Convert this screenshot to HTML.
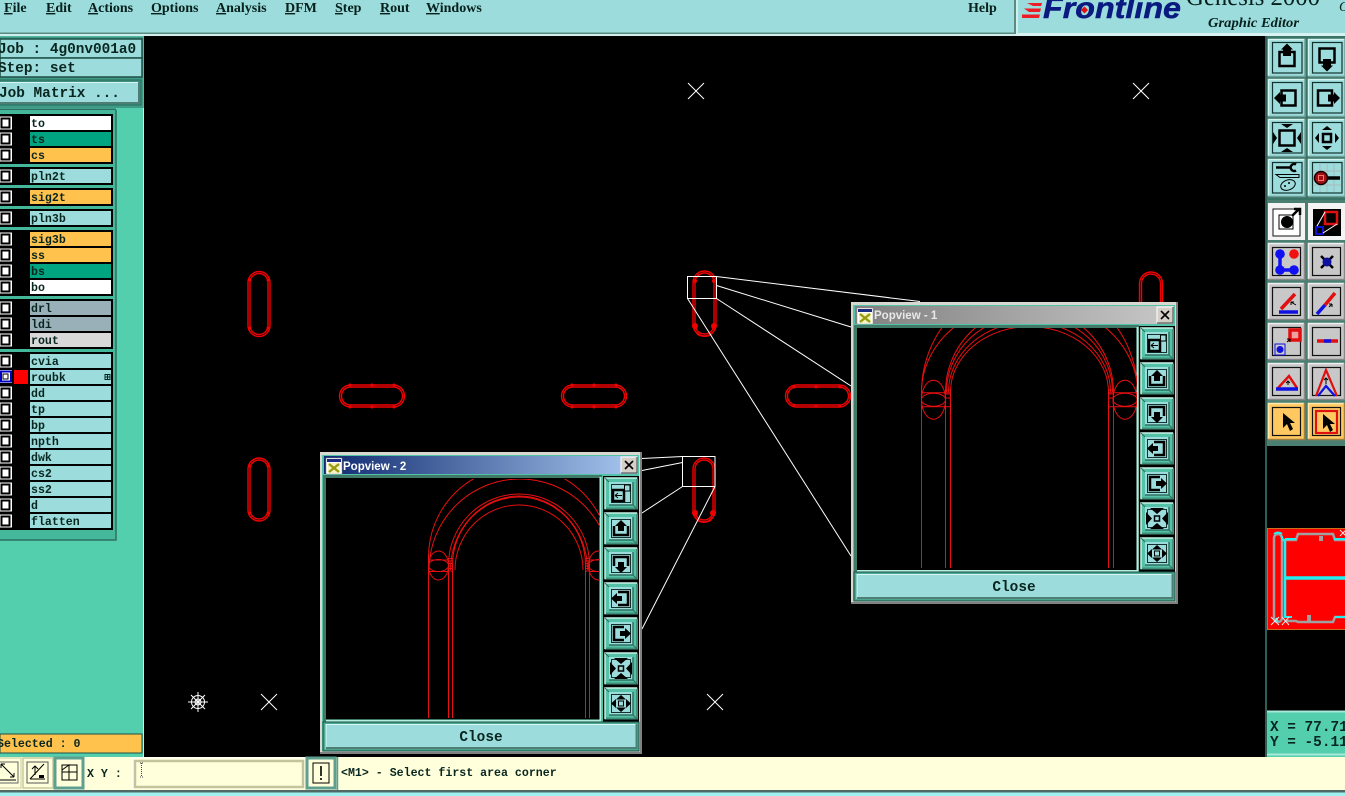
<!DOCTYPE html>
<html><head><meta charset="utf-8"><title>Genesis 2000 Graphic Editor</title>
<style>
html,body{margin:0;padding:0;background:#000;overflow:hidden}
svg{display:block}
.m{font-family:"Liberation Mono",monospace;font-weight:bold;fill:#08261f}
.l{font-size:11.6px}
.b{font-size:14.4px}
.n{font-family:"Liberation Serif",serif;font-weight:bold;font-size:14px;fill:#06201c}
.u{text-decoration:underline}
.w{fill:none;stroke:#fff;stroke-width:1}
.r{fill:none;stroke:#e81010;stroke-width:1}
.s{fill:none;stroke:#f00000;stroke-width:1.4}
</style></head><body>
<svg width="1345" height="796" viewBox="0 0 1345 796" xmlns="http://www.w3.org/2000/svg" xmlns:xlink="http://www.w3.org/1999/xlink">
<defs>
<clipPath id="c1"><rect x="857" y="328" width="280" height="242"/></clipPath>
<clipPath id="c2"><rect x="326" y="479" width="274" height="240"/></clipPath>
<clipPath id="mm"><rect x="1267" y="528" width="78" height="102"/></clipPath>
<!-- teal button base -->
<g id="tb"><rect x="0" y="0" width="37" height="37.500" fill="#9cdcdc"/><path d="M0.500 37V0.500H37" fill="none" stroke="#d4f4f0" stroke-width="1.500"/><path d="M37 0V37.500H0" fill="none" stroke="#6f9f98" stroke-width="1.500"/><rect x="4.500" y="3.500" width="29.500" height="30.500" fill="#9cdcdc" stroke="#12332d" stroke-width="1.200"/></g>
<!-- gray button base -->
<g id="gb"><rect width="37" height="37" fill="#c8c8c8"/><path d="M0.500 36V0.500H36" fill="none" stroke="#f0f0f0" stroke-width="1.500"/><path d="M36.500 0V36.500H0" fill="none" stroke="#888" stroke-width="1.500"/><rect x="4.500" y="4.500" width="28" height="28" fill="#c8c8c8" stroke="#111" stroke-width="1.200"/></g>
<g id="ob"><rect width="37" height="37" fill="#ffc860"/><path d="M0.500 36V0.500H36" fill="none" stroke="#ffe8b0" stroke-width="1.500"/><path d="M36.500 0V36.500H0" fill="none" stroke="#a08040" stroke-width="1.500"/><rect x="4.500" y="4.500" width="28" height="28" fill="#ffc860" stroke="#111" stroke-width="1.200"/></g>
<!-- arrows -->
<g id="up"><rect x="11.500" y="14" width="15" height="14" fill="none" stroke="#000" stroke-width="2.500"/><path d="M19 5.500L25 11.500H23V18H15V11.500H13Z" fill="#000"/></g>
<g id="dn"><rect x="11.500" y="9.500" width="15" height="14" fill="none" stroke="#000" stroke-width="2.500"/><path d="M19 32.500L25 26.500H23V20H15V26.500H13Z" fill="#000"/></g>
<g id="lf"><rect x="13.500" y="11.500" width="14" height="15" fill="none" stroke="#000" stroke-width="2.500"/><path d="M6 19L12 13V15.500H18V22.500H12V25Z" fill="#000"/></g>
<g id="rt"><rect x="10" y="11.500" width="14" height="15" fill="none" stroke="#000" stroke-width="2.500"/><path d="M32 19L26 13V15.500H20V22.500H26V25Z" fill="#000"/></g>
<g id="zi"><rect x="11.500" y="11.500" width="15" height="15" fill="none" stroke="#000" stroke-width="2.500"/><path d="M13 5H25L19 9ZM13 33H25L19 29ZM5 13V25L9 19ZM33 13V25L29 19Z" fill="#000"/></g>
<g id="zo"><rect x="15" y="15" width="8" height="8" fill="none" stroke="#000" stroke-width="2.500"/><path d="M19 7L24 11H14ZM19 31L24 27H14ZM7 19L11 14V24ZM31 19L27 14V24Z" fill="#000"/></g>
<!-- popup button -->
<g id="pb"><rect width="34" height="34" fill="#000"/><rect x="0.500" y="0.500" width="33" height="32" fill="#53c2a6"/><path d="M1 32V1H33" fill="none" stroke="#c8f2e8" stroke-width="1.500"/><path d="M2 31.500H33V2" fill="none" stroke="#3f8f7a" stroke-width="2"/><path d="M1 1L5 5M33 32L29 28" stroke="#2f6f60"/><rect x="5" y="5" width="24" height="23" fill="#9cdcdc"/><path d="M5 28H29V5" fill="none" stroke="#2f6f60" stroke-width="1.500"/></g>
<g id="p0"><rect x="7.500" y="7.500" width="19" height="18" fill="#9cdcdc" stroke="#12332d"/><rect x="9" y="13" width="11" height="11" fill="#9cdcdc" stroke="#000" stroke-width="2.500"/><rect x="20.500" y="8" width="5.500" height="6" fill="#9cdcdc" stroke="#000"/><path d="M11 18.500H18M11 18.500L14 16M11 18.500L14 21" stroke="#000" fill="none"/></g>
<g id="p1"><rect x="7.500" y="7.500" width="19" height="18" fill="#9cdcdc" stroke="#12332d"/><path d="M10 14V23H24V14" fill="none" stroke="#000" stroke-width="2.500"/><path d="M17 8L23 14H20V19H14V14H11Z" fill="#000"/></g>
<g id="p2"><rect x="7.500" y="7.500" width="19" height="18" fill="#9cdcdc" stroke="#12332d"/><path d="M10 19V10H24V19" fill="none" stroke="#000" stroke-width="2.500"/><path d="M17 26L23 20H20V15H14V20H11Z" fill="#000"/></g>
<g id="p3"><rect x="7.500" y="7.500" width="19" height="18" fill="#9cdcdc" stroke="#12332d"/><path d="M14 10H24V23H14" fill="none" stroke="#000" stroke-width="2.500"/><path d="M7 16.500L13 11V14H18V19H13V22Z" fill="#000"/></g>
<g id="p4"><rect x="7.500" y="7.500" width="19" height="18" fill="#9cdcdc" stroke="#12332d"/><path d="M20 10H10V23H20" fill="none" stroke="#000" stroke-width="2.500"/><path d="M27 16.500L21 11V14H16V19H21V22Z" fill="#000"/></g>
<g id="p5"><rect x="7.500" y="7.500" width="19" height="18" fill="#9cdcdc" stroke="#12332d"/><rect x="14.500" y="14" width="5" height="5" fill="none" stroke="#000" stroke-width="1.500"/><path d="M10 6H24L17 12ZM10 27H24L17 21ZM6 10V23L12 16.500ZM28 10V23L22 16.500Z" fill="#000"/></g>
<g id="p6"><rect x="7.500" y="7.500" width="19" height="18" fill="#9cdcdc" stroke="#12332d"/><rect x="14.500" y="14" width="5" height="5" fill="none" stroke="#000"/><path d="M17 8L22 12.500H12ZM17 25L22 20.500H12ZM7 16.500L12 12V21ZM27 16.500L22 12V21Z" fill="#000"/></g>
<g id="ti"><rect width="16" height="16" fill="#fff" stroke="#888" stroke-width=".5"/><rect x="1" y="1" width="14" height="3" fill="#1c2c80"/><rect x="2" y="5" width="12" height="10" fill="#f4f4c0"/><path d="M3 6L13 14M13 6L3 14" stroke="#9a9a10" stroke-width="2.400"/></g>
<g id="cx"><rect width="16" height="16" fill="#d4d0c8"/><path d="M0 16V0H16" fill="none" stroke="#fff"/><path d="M0 16H16V0" fill="none" stroke="#444"/><path d="M4 4L12 12M12 4L4 12" stroke="#000" stroke-width="1.600"/></g>
<g id="ck"><rect x="0" y="-6.500" width="12" height="13" fill="#fff"/><rect x="1.500" y="-4.500" width="8" height="9" fill="none" stroke="#000" stroke-width="2"/></g>
<g id="x8"><path d="M-8 -8L8 8M-8 8L8 -8" stroke="#fff" stroke-width="1"/></g>
<linearGradient id="g2"><stop offset="0" stop-color="#0f2a70"/><stop offset="1" stop-color="#a8c8f0"/></linearGradient>
<linearGradient id="g1"><stop offset="0" stop-color="#808080"/><stop offset="1" stop-color="#c8c8c8"/></linearGradient>
</defs>

<rect width="1345" height="796" fill="#000"/>

<!-- top menu -->
<rect width="1345" height="36" fill="#9cdcdc"/>
<path d="M0 33.500H1015V0" fill="none" stroke="#5a8a80" stroke-width="2"/>
<path d="M1017 36V0" stroke="#e0f6f4" stroke-width="1.500"/>
<rect x="0" y="34" width="1016" height="2" fill="#d0eeee"/>
<rect x="1016" y="33" width="329" height="3" fill="#d8f2f2"/>
<text x="4" y="12" class="n"><tspan class="u">F</tspan>ile</text>
<text x="46" y="12" class="n"><tspan class="u">E</tspan>dit</text>
<text x="88" y="12" class="n"><tspan class="u">A</tspan>ctions</text>
<text x="151" y="12" class="n"><tspan class="u">O</tspan>ptions</text>
<text x="216" y="12" class="n"><tspan class="u">A</tspan>nalysis</text>
<text x="285" y="12" class="n"><tspan class="u">D</tspan>FM</text>
<text x="335" y="12" class="n"><tspan class="u">S</tspan>tep</text>
<text x="380" y="12" class="n"><tspan class="u">R</tspan>out</text>
<text x="426" y="12" class="n"><tspan class="u">W</tspan>indows</text>
<text x="968" y="12" class="n">Help</text>

<!-- logo -->
<path d="M1027 3H1042L1041 6H1033ZM1024 8.500H1041L1040 12H1029ZM1022 14.500H1040L1039 18H1022Z" fill="#ee1c24"/>
<text x="1043" y="18" font-family="Liberation Sans,sans-serif" font-style="italic" font-weight="bold" font-size="30" fill="#0a1a80" stroke="#0a1a80" stroke-width=".5" textLength="138" lengthAdjust="spacingAndGlyphs">Frontline</text>
<path d="M1084.500 6.500L1088 10L1084.500 13.500L1081 10Z" fill="#e01010"/>
<text x="1186" y="5" font-family="Liberation Serif,serif" font-size="25" fill="#06201c" textLength="134" lengthAdjust="spacingAndGlyphs">Genesis 2000</text>
<text x="1208" y="27" font-family="Liberation Serif,serif" font-style="italic" font-weight="bold" font-size="14" fill="#06201c" textLength="91" lengthAdjust="spacingAndGlyphs">Graphic Editor</text>
<text x="1339" y="11" font-family="Liberation Serif,serif" font-style="italic" font-size="14" fill="#06201c">G</text>

<!-- left column -->
<rect x="0" y="36" width="144" height="721" fill="#53b8a0"/>
<rect x="0" y="37" width="143" height="71" fill="#3f9a86"/>
<rect x="0" y="39" width="142" height="19" fill="#9cdcdc" stroke="#1f5046" stroke-width="1.500"/>
<rect x="0" y="58" width="142" height="19" fill="#9cdcdc" stroke="#1f5046" stroke-width="1.500"/>
<rect x="-1" y="80" width="142" height="25" fill="#3f8f7e" stroke="#2a6a5a"/>
<rect x="0" y="82" width="139" height="21" fill="#9cdcdc"/>
<path d="M0 82.500H139" stroke="#d8f6f4"/><path d="M0 103H139V82" fill="none" stroke="#4f7f74" stroke-width="2"/>
<text x="-2" y="53" class="m b">Job : 4g0nv001a0</text>
<text x="-2" y="72" class="m b">Step: set</text>
<text x="-1" y="97" class="m b">Job Matrix ...</text>

<rect x="0" y="108" width="143" height="622" fill="#53cfae"/>
<path d="M0 109.500H116" stroke="#2f6f60" stroke-width="2"/>
<path d="M143.500 108V757" stroke="#c4f2e4"/>
<rect x="0" y="110" width="116" height="430" fill="#45b89c"/>
<path d="M116 110V540H0" fill="none" stroke="#2f6f60" stroke-width="1.500"/>
<rect x="0" y="114" width="113" height="50" fill="#000"/>
<rect x="0" y="167" width="113" height="18" fill="#000"/>
<rect x="0" y="188" width="113" height="18" fill="#000"/>
<rect x="0" y="209" width="113" height="18" fill="#000"/>
<rect x="0" y="230" width="113" height="66" fill="#000"/>
<rect x="0" y="299" width="113" height="50" fill="#000"/>
<rect x="0" y="352" width="113" height="178" fill="#000"/>

<!-- layer labels -->
<rect x="30" y="116" width="81" height="14" fill="#fff"/>
<rect x="30" y="132" width="81" height="14" fill="#00a480"/>
<rect x="30" y="148" width="81" height="14" fill="#ffc24d"/>
<rect x="30" y="169" width="81" height="14" fill="#9cdcdc"/>
<rect x="30" y="190" width="81" height="14" fill="#ffc24d"/>
<rect x="30" y="211" width="81" height="14" fill="#9cdcdc"/>
<rect x="30" y="232" width="81" height="14" fill="#ffc24d"/>
<rect x="30" y="248" width="81" height="14" fill="#ffc24d"/>
<rect x="30" y="264" width="81" height="14" fill="#00a480"/>
<rect x="30" y="280" width="81" height="14" fill="#fff"/>
<rect x="30" y="301" width="81" height="14" fill="#9ab0b8"/>
<rect x="30" y="317" width="81" height="14" fill="#9ab0b8"/>
<rect x="30" y="333" width="81" height="14" fill="#d8d8d8"/>
<rect x="30" y="354" width="81" height="14" fill="#9cdcdc"/>
<rect x="30" y="370" width="81" height="14" fill="#9cdcdc"/>
<rect x="30" y="386" width="81" height="14" fill="#9cdcdc"/>
<rect x="30" y="402" width="81" height="14" fill="#9cdcdc"/>
<rect x="30" y="418" width="81" height="14" fill="#9cdcdc"/>
<rect x="30" y="434" width="81" height="14" fill="#9cdcdc"/>
<rect x="30" y="450" width="81" height="14" fill="#9cdcdc"/>
<rect x="30" y="466" width="81" height="14" fill="#9cdcdc"/>
<rect x="30" y="482" width="81" height="14" fill="#9cdcdc"/>
<rect x="30" y="498" width="81" height="14" fill="#9cdcdc"/>
<rect x="30" y="514" width="81" height="14" fill="#9cdcdc"/>
<rect x="14" y="370" width="14" height="14" fill="#ff0000"/>
<rect x="105" y="374.500" width="5" height="5" fill="none" stroke="#08261f"/>
<path d="M107.500 375V379M105.500 377H109.500" stroke="#08261f"/>
<g class="m l">
<text x="31" y="127">to</text><text x="31" y="143">ts</text><text x="31" y="159">cs</text>
<text x="31" y="180">pln2t</text><text x="31" y="201">sig2t</text><text x="31" y="222">pln3b</text>
<text x="31" y="243">sig3b</text><text x="31" y="259">ss</text><text x="31" y="275">bs</text><text x="31" y="291">bo</text>
<text x="31" y="312">drl</text><text x="31" y="328">ldi</text><text x="31" y="344">rout</text>
<text x="31" y="365">cvia</text><text x="31" y="381">roubk</text><text x="31" y="397">dd</text>
<text x="31" y="413">tp</text><text x="31" y="429">bp</text><text x="31" y="445">npth</text>
<text x="31" y="461">dwk</text><text x="31" y="477">cs2</text><text x="31" y="493">ss2</text>
<text x="31" y="509">d</text><text x="31" y="525">flatten</text>
</g>
<use xlink:href="#ck" x="0" y="123"/><use xlink:href="#ck" x="0" y="139"/><use xlink:href="#ck" x="0" y="155"/>
<use xlink:href="#ck" x="0" y="176"/><use xlink:href="#ck" x="0" y="197"/><use xlink:href="#ck" x="0" y="218"/>
<use xlink:href="#ck" x="0" y="239"/><use xlink:href="#ck" x="0" y="255"/><use xlink:href="#ck" x="0" y="271"/><use xlink:href="#ck" x="0" y="287"/>
<use xlink:href="#ck" x="0" y="308"/><use xlink:href="#ck" x="0" y="324"/><use xlink:href="#ck" x="0" y="340"/>
<use xlink:href="#ck" x="0" y="361"/>
<rect x="0" y="370" width="12" height="13" fill="#fff"/><rect x="1" y="371.500" width="10" height="10" fill="none" stroke="#0000c0" stroke-width="2"/><rect x="3" y="374" width="5" height="5" fill="#fff" stroke="#000" stroke-width="1"/>
<use xlink:href="#ck" x="0" y="393"/><use xlink:href="#ck" x="0" y="409"/><use xlink:href="#ck" x="0" y="425"/><use xlink:href="#ck" x="0" y="441"/>
<use xlink:href="#ck" x="0" y="457"/><use xlink:href="#ck" x="0" y="473"/><use xlink:href="#ck" x="0" y="489"/><use xlink:href="#ck" x="0" y="505"/><use xlink:href="#ck" x="0" y="521"/>

<rect x="0" y="730" width="143" height="27" fill="#53cfae"/>
<rect x="0" y="734" width="142" height="19" fill="#ffc24d" stroke="#1f5046"/>
<text x="-3" y="747" class="m" font-size="11.600">Selected : 0</text>

<!-- main canvas features -->
<use xlink:href="#x8" x="696" y="91"/><use xlink:href="#x8" x="1141" y="91"/>
<use xlink:href="#x8" x="269" y="702"/><use xlink:href="#x8" x="715" y="702"/>
<g stroke="#fff" fill="none"><circle cx="198" cy="702" r="6.500"/><circle cx="198" cy="702" r="3"/><path d="M188 702H208M198 692V712M191 695L205 709M205 695L191 709"/></g>

<g class="s">
<rect x="248" y="271.500" width="22" height="65" rx="11"/><rect x="250" y="273.500" width="18" height="61" rx="9"/>
<rect x="693" y="271" width="23" height="65" rx="11.500"/><rect x="695" y="273" width="19" height="61" rx="9.500"/>
<rect x="1139.500" y="272" width="23" height="65" rx="11.500"/><rect x="1141.500" y="274" width="19" height="61" rx="9.500"/>
<rect x="248" y="458" width="22" height="63" rx="11"/><rect x="250" y="460" width="18" height="59" rx="9"/>
<rect x="693" y="458" width="22" height="64" rx="11"/><rect x="695" y="460" width="18" height="60" rx="9"/>
<rect x="339.500" y="385" width="65" height="22" rx="11"/><rect x="341.500" y="387" width="61" height="18" rx="9"/>
<rect x="561.500" y="385" width="65" height="22" rx="11"/><rect x="563.500" y="387" width="61" height="18" rx="9"/>
<rect x="785.500" y="385" width="65" height="22" rx="11"/><rect x="787.500" y="387" width="61" height="18" rx="9"/>
</g>
<g fill="#f00000">
<circle cx="695" cy="281" r="2"/><circle cx="714" cy="281" r="2"/><circle cx="695" cy="326" r="3"/><circle cx="714" cy="326" r="3"/><path d="M695 330Q705 341 714 330L712 335Q705 339 697 335Z"/>
<circle cx="695" cy="513" r="3"/><circle cx="713" cy="513" r="3"/><path d="M695 516Q704 527 713 516L711 521Q704 525 697 521Z"/>
<circle cx="794" cy="387" r="1.500"/><circle cx="794" cy="406" r="1.500"/><circle cx="816" cy="387" r="1.500"/><circle cx="816" cy="406" r="1.500"/><circle cx="840" cy="387" r="1.500"/><circle cx="840" cy="406" r="1.500"/>
<circle cx="350" cy="385" r="1.500"/><circle cx="350" cy="407" r="1.500"/><circle cx="372" cy="385" r="1.500"/><circle cx="372" cy="407" r="1.500"/><circle cx="394" cy="385" r="1.500"/><circle cx="394" cy="407" r="1.500"/>
<circle cx="572" cy="385" r="1.500"/><circle cx="572" cy="407" r="1.500"/><circle cx="594" cy="385" r="1.500"/><circle cx="594" cy="407" r="1.500"/><circle cx="616" cy="385" r="1.500"/><circle cx="616" cy="407" r="1.500"/>
<circle cx="250" cy="280" r="1.500"/><circle cx="268" cy="280" r="1.500"/><circle cx="250" cy="328" r="1.500"/><circle cx="268" cy="328" r="1.500"/>
<circle cx="250" cy="466" r="1.500"/><circle cx="268" cy="466" r="1.500"/><circle cx="250" cy="513" r="1.500"/><circle cx="268" cy="513" r="1.500"/>
</g>
<g class="w">
<rect x="687.500" y="276.500" width="29" height="22"/>
<path d="M716.500 276.500L920 301.500M716.500 285.500L851 327M716.500 298.500L851 386M687.500 298.500L851 556"/>
<rect x="682.500" y="456.500" width="32.500" height="30"/>
<path d="M682.500 456.500L642 458.500M682.500 462.500L642 470.500M682.500 486.500L642 513M715 486.500L642 629"/>
</g>

<!-- right panel -->
<rect x="1265" y="36" width="80" height="410" fill="#3a7466"/>
<rect x="1265" y="36" width="2" height="722" fill="#2f5f54"/>
<use xlink:href="#tb" x="1268" y="39"/><use xlink:href="#up" x="1268" y="38"/>
<use xlink:href="#tb" x="1308" y="39"/><use xlink:href="#dn" x="1308" y="39"/>
<use xlink:href="#tb" x="1268" y="79"/><use xlink:href="#lf" x="1268" y="79"/>
<use xlink:href="#tb" x="1308" y="79"/><use xlink:href="#rt" x="1308" y="79"/>
<use xlink:href="#tb" x="1268" y="119"/><use xlink:href="#zi" x="1268" y="119"/>
<use xlink:href="#tb" x="1308" y="119"/><use xlink:href="#zo" x="1308" y="119"/>
<use xlink:href="#tb" x="1268" y="159"/>
<g transform="translate(1268,159)"><path d="M8 8.500H23" stroke="#000" stroke-width="2.500"/><path d="M28 5.500A3.500 3.500 0 1 0 28 11.500" fill="none" stroke="#000" stroke-width="2.500"/><path d="M8 15.500H31V18.500H12Z" fill="#9cdcdc" stroke="#000"/><ellipse cx="20" cy="26" rx="7.500" ry="5" fill="none" stroke="#000" transform="rotate(-20 20 26)"/><circle cx="17" cy="27" r="1" fill="#000"/><circle cx="21" cy="24" r="1" fill="#000"/></g>
<use xlink:href="#tb" x="1308" y="159"/>
<g transform="translate(1308,159)"><path d="M5 19H33M19 5V33M12 5V33M26 5V33M5 12H33M5 26H33" stroke="#a8bcbc"/><path d="M14 19H32" stroke="#000" stroke-width="3.500"/><circle cx="13" cy="19" r="6.500" fill="#a01010" stroke="#100" stroke-width="1.500"/><rect x="10.500" y="16.500" width="5" height="5" fill="none" stroke="#ff7070"/></g>

<!-- gray tools -->
<rect x="1267" y="200" width="78" height="246" fill="#4a7f72"/>
<rect x="1268" y="203" width="37" height="37" fill="#f4f4f4"/><rect x="1273" y="209" width="27" height="27" fill="#fff" stroke="#111"/>
<rect x="1279" y="215" width="14" height="14" fill="none" stroke="#000"/><circle cx="1287" cy="222" r="6" fill="#000"/><path d="M1292 216L1299 209M1294 209H1300V215" fill="none" stroke="#000" stroke-width="2.500"/>
<rect x="1308" y="203" width="37" height="37" fill="#f4f4f4"/><rect x="1313" y="209" width="28" height="27" fill="#000"/>
<rect x="1325" y="212" width="12" height="12" fill="none" stroke="#e01010" stroke-width="2.500"/><rect x="1316" y="227" width="7" height="7" fill="none" stroke="#1010d0" stroke-width="2"/><path d="M1317 226L1325 212M1323 233L1337 224" stroke="#fff"/>

<use xlink:href="#gb" x="1268" y="243"/>
<g><circle cx="1280" cy="254" r="4.800" fill="#1010f0"/><circle cx="1294" cy="254" r="4.800" fill="#f01010"/><circle cx="1280" cy="270" r="4.800" fill="#1010f0"/><circle cx="1294" cy="270" r="4.800" fill="#1010f0"/><path d="M1280 254V270H1294" fill="none" stroke="#1010f0" stroke-width="3.500"/></g>
<use xlink:href="#gb" x="1308" y="243"/>
<path d="M1321 256L1333 268M1333 256L1321 268" stroke="#000" stroke-width="2.500"/><circle cx="1327" cy="262" r="4.500" fill="#1010a0"/>

<use xlink:href="#gb" x="1268" y="283"/>
<path d="M1281 309L1295 294" stroke="#e01010" stroke-width="3.500"/><path d="M1279 312H1298" stroke="#1010e0" stroke-width="3.500"/><path d="M1296 305L1291 302M1291 302V305M1291 302H1294" fill="none" stroke="#000"/>
<use xlink:href="#gb" x="1308" y="283"/>
<path d="M1335 293L1325 305" stroke="#e01010" stroke-width="3.500"/><path d="M1325 305L1317 314" stroke="#1010e0" stroke-width="3.500"/><path d="M1329 307L1332 304M1332 304H1329M1332 304V307" fill="none" stroke="#000"/>

<use xlink:href="#gb" x="1268" y="323"/>
<rect x="1290" y="330" width="10" height="10" fill="#f0a0a0" stroke="#e01010" stroke-width="3.500"/><rect x="1275" y="344" width="10" height="11" fill="none" stroke="#1010e0"/><circle cx="1280" cy="349.500" r="3.500" fill="#1010e0"/><path d="M1287 342L1290 339M1290 339H1287M1290 339V342" fill="none" stroke="#000"/>
<use xlink:href="#gb" x="1308" y="323"/>
<path d="M1317 341H1338" stroke="#e01010" stroke-width="3.500"/><path d="M1324 341H1331" stroke="#1010e0" stroke-width="3.500"/>

<use xlink:href="#gb" x="1268" y="363"/>
<path d="M1278 388L1289 376L1297 388" fill="none" stroke="#e01010" stroke-width="2.500"/><path d="M1276 389H1298" stroke="#1010e0" stroke-width="3.500"/><path d="M1288 385V382M1286 383L1288 381L1290 383" fill="none" stroke="#000"/>
<use xlink:href="#gb" x="1308" y="363"/>
<path d="M1316 396L1326 370L1337 396" fill="none" stroke="#e01010" stroke-width="2.200"/><path d="M1318 396L1326 386L1335 396" fill="none" stroke="#1010e0" stroke-width="2.200"/><path d="M1326 384V378M1324 380L1326 378L1328 380" fill="none" stroke="#000"/>

<use xlink:href="#ob" x="1268" y="403"/>
<path d="M1283 413L1283 428L1287 424L1290 431L1293 429L1290 423L1295 423Z" fill="#000"/>
<use xlink:href="#ob" x="1308" y="403"/>
<rect x="1316" y="411" width="21" height="22" fill="none" stroke="#e01010" stroke-width="2.200"/>
<path d="M1323 414L1323 429L1327 425L1330 432L1333 430L1330 424L1335 424Z" fill="#000"/>

<!-- minimap -->
<rect x="1267" y="446" width="78" height="265" fill="#000"/>
<rect x="1267" y="528" width="78" height="102" fill="#ff0000"/>
<path d="M1267.500 630V528.500H1345M1267.500 629.500H1345" fill="none" stroke="#c87020"/>
<g clip-path="url(#mm)" fill="none">
<path d="M1285 540H1296L1298 534H1333L1335 540H1346M1285 621H1296L1298 622H1333L1335 617H1346" stroke="#a0a0a0" stroke-width="2.500"/>
<rect x="1274" y="534" width="8" height="88" rx="4" stroke="#a0a0a0" stroke-width="2.500"/>
<path d="M1285 539V617" stroke="#20f0f0" stroke-width="2.500"/>
<path d="M1285 578H1346" stroke="#20f0f0" stroke-width="3.500"/>
<path d="M1285 539H1296M1334 539H1346M1284 617H1292M1335 617H1346M1281 536L1284 541M1274 534Q1278 531 1282 534M1276 618L1278 622" stroke="#20f0f0" stroke-width="2"/>
<path d="M1321 536V541M1309 615V621" stroke="#a0a0a0" stroke-width="4"/>
<path d="M1271 617L1279 625M1279 617L1271 625M1282 617L1289 625M1289 617L1282 625M1340 530L1346 536M1346 530L1340 536" stroke="#e8e8e8"/>
</g>
<rect x="1267" y="711" width="78" height="46" fill="#53cfae"/>
<path d="M1267 711.500H1345" stroke="#a8e8d8" stroke-width="2"/><path d="M1267 754.500H1345" stroke="#a8e8d8" stroke-width="2"/>
<text x="1270" y="731" class="m b">X = 77.711</text>
<text x="1270" y="746" class="m b">Y = -5.115</text>

<!-- bottom bar -->
<rect x="0" y="757" width="1345" height="33" fill="#ffffdc"/>
<rect x="0" y="790" width="1345" height="2.500" fill="#4e6a66"/>
<rect x="0" y="792.500" width="1345" height="3.500" fill="#a0f0f0"/>
<rect x="-4" y="758" width="25" height="30" fill="#ffffdc" stroke="#c8c8a0"/><rect x="-2" y="762" width="20" height="21" fill="#ffffdc" stroke="#666"/>
<path d="M1 764L14 777M1 764H5M1 764V768M14 777H10M14 777V773M0 780H16" stroke="#000" fill="none"/>
<rect x="23" y="758" width="30" height="30" fill="#ffffdc" stroke="#c8c8a0" stroke-width="1.500"/><rect x="27" y="762" width="21" height="21" fill="#ffffdc" stroke="#555"/>
<path d="M30 779H45M30 779L44 764M35 766V775M32 769L35 766L38 769" stroke="#000" fill="none"/><rect x="39" y="775" width="5" height="3" fill="#000"/>
<rect x="55" y="758" width="28" height="30" fill="#ffffdc" stroke="#5f9f90" stroke-width="3"/><rect x="62" y="765" width="15" height="15" fill="#ffffdc" stroke="#000"/>
<path d="M62 772H77M69 772V780M69 772V765L62 770" stroke="#000" fill="none"/>
<text x="87" y="777" class="m l">X Y :</text>
<rect x="132" y="758" width="172" height="30" fill="#ffffdc" stroke="#fff"/>
<rect x="135" y="761" width="168" height="26" fill="#ffffdc" stroke="#c4c49c" stroke-width="2.500"/>
<path d="M140 763H143M141.500 763V777M140 777H143" stroke="#444" stroke-dasharray="1 1"/>
<rect x="307" y="758" width="28" height="30" fill="#ffffdc" stroke="#5f9f90" stroke-width="3"/>
<rect x="313" y="763" width="16" height="20" fill="#ffffdc" stroke="#000"/>
<path d="M321 766V776M321 778V780" stroke="#000" stroke-width="1.600"/>
<path d="M337.500 757V790" stroke="#5f9f90" stroke-width="1.500"/>
<text x="341" y="776" class="m l">&lt;M1&gt; - Select first area corner</text>

<!-- Popview 2 -->
<rect x="320" y="452" width="322" height="302" fill="#808080"/>
<rect x="320" y="452" width="320" height="300" fill="#d8d8d0"/>
<rect x="322" y="455" width="317" height="296" fill="#53c2a6"/>
<rect x="324" y="456" width="314" height="18" fill="url(#g2)"/>
<use xlink:href="#ti" x="326" y="458"/>
<text x="343" y="470" font-family="Liberation Sans,sans-serif" font-weight="bold" font-size="11.500" fill="#fff">Popview - 2</text>
<use xlink:href="#cx" x="621" y="457"/>
<rect x="323" y="475" width="279" height="248" fill="#3f7a68"/>
<rect x="326" y="478" width="274" height="241" fill="#000"/>
<path d="M600.500 477V721H326" fill="none" stroke="#b4f0e0" stroke-width="2"/>
<rect x="603" y="476" width="36" height="246" fill="#000"/>
<g clip-path="url(#c2)">
<g class="r">
<path d="M428.500 718V557A90.500 90.500 0 0 1 609.500 557V718"/>
<path d="M429 570A91 91 0 0 1 611 570"/>
<path d="M448.500 718V565A70.500 71 0 0 1 589.500 565V718"/>
<path d="M450.500 570A68.500 74 0 0 1 587.500 570"/>
<path d="M452.500 718V565A66.500 68 0 0 1 585.500 565V718"/>
<path d="M455 570A64 65 0 0 1 583 570"/>
<ellipse cx="438.500" cy="565.500" rx="10" ry="14.500"/><ellipse cx="438.500" cy="565.500" rx="10" ry="6"/>
<path d="M428 560H449M428 571.500H449M448 558.500H453M448 561H453M448 563.500H453M448 566H453M448 568.500H453M448 571H453"/>
<ellipse cx="598.500" cy="565.500" rx="10" ry="14.500"/><ellipse cx="598.500" cy="565.500" rx="10" ry="6"/>
<path d="M589 560H600M589 571.500H600M585 558.500H590M585 561H590M585 563.500H590M585 566H590M585 568.500H590M585 571H590"/>
</g></g>
<use xlink:href="#pb" x="604" y="477"/><use xlink:href="#p0" x="604" y="477"/>
<use xlink:href="#pb" x="604" y="512"/><use xlink:href="#p1" x="604" y="512"/>
<use xlink:href="#pb" x="604" y="547"/><use xlink:href="#p2" x="604" y="547"/>
<use xlink:href="#pb" x="604" y="582"/><use xlink:href="#p3" x="604" y="582"/>
<use xlink:href="#pb" x="604" y="617"/><use xlink:href="#p4" x="604" y="617"/>
<use xlink:href="#pb" x="604" y="652"/><use xlink:href="#p5" x="604" y="652"/>
<use xlink:href="#pb" x="604" y="687"/><use xlink:href="#p6" x="604" y="687"/>
<rect x="323" y="722" width="316" height="29" fill="#4aa893" stroke="#1f5046"/>
<rect x="326" y="724" width="311" height="25" fill="#9cdcdc"/>
<path d="M326 749V724.500H637" fill="none" stroke="#d8f6f4"/><path d="M326 748H636.500V724" fill="none" stroke="#4f7f74" stroke-width="2"/>
<text x="481" y="741" text-anchor="middle" class="m b">Close</text>

<!-- Popview 1 -->
<rect x="851" y="302" width="327" height="302" fill="#808080"/>
<rect x="851" y="302" width="325" height="300" fill="#d8d8d0"/>
<rect x="853" y="305" width="322" height="296" fill="#53c2a6"/>
<rect x="855" y="306" width="319" height="18" fill="url(#g1)"/>
<use xlink:href="#ti" x="857" y="308"/>
<text x="874" y="319" font-family="Liberation Sans,sans-serif" font-weight="bold" font-size="11.500" fill="#e8e8e8">Popview - 1</text>
<use xlink:href="#cx" x="1157" y="307"/>
<rect x="854" y="325" width="285" height="248" fill="#3f7a68"/>
<rect x="857" y="328" width="280" height="242" fill="#000"/>
<path d="M1137.500 327V571H857" fill="none" stroke="#b4f0e0" stroke-width="2"/>
<rect x="1139" y="326" width="36" height="246" fill="#000"/>
<g clip-path="url(#c1)">
<g class="r">
<path d="M921.500 568V392A108 110 0 0 1 1137.500 392"/>
<path d="M921.500 392A108 90.600 0 0 1 1137.500 392"/>
<path d="M945.500 568V392A84 84 0 0 1 1113.500 392V568"/>
<path d="M946.500 392A83 77 0 0 1 1112.500 392"/>
<path d="M948.500 392A81 70 0 0 1 1110.500 392"/>
<path d="M950.500 568V392A79 65.400 0 0 1 1108.500 392V568"/>
<ellipse cx="933.500" cy="399.700" rx="12" ry="19.500"/><ellipse cx="933.500" cy="399.700" rx="12" ry="6.500"/>
<path d="M921 392.700H951M921 406.700H951M945 390H951M945 394H951M945 398H951"/>
<ellipse cx="1125" cy="399.700" rx="12" ry="19.500"/><ellipse cx="1125" cy="399.700" rx="12" ry="6.500"/>
<path d="M1108 392.700H1137M1108 406.700H1137M1108 390H1114M1108 394H1114M1108 398H1114"/>
</g></g>
<use xlink:href="#pb" x="1140" y="327"/><use xlink:href="#p0" x="1140" y="327"/>
<use xlink:href="#pb" x="1140" y="362"/><use xlink:href="#p1" x="1140" y="362"/>
<use xlink:href="#pb" x="1140" y="397"/><use xlink:href="#p2" x="1140" y="397"/>
<use xlink:href="#pb" x="1140" y="432"/><use xlink:href="#p3" x="1140" y="432"/>
<use xlink:href="#pb" x="1140" y="467"/><use xlink:href="#p4" x="1140" y="467"/>
<use xlink:href="#pb" x="1140" y="502"/><use xlink:href="#p5" x="1140" y="502"/>
<use xlink:href="#pb" x="1140" y="537"/><use xlink:href="#p6" x="1140" y="537"/>
<rect x="854" y="572" width="321" height="29" fill="#4aa893" stroke="#1f5046"/>
<rect x="857" y="574" width="316" height="25" fill="#9cdcdc"/>
<path d="M857 599V574.500H1173" fill="none" stroke="#d8f6f4"/><path d="M857 598H1172.500V574" fill="none" stroke="#4f7f74" stroke-width="2"/>
<text x="1014" y="591" text-anchor="middle" class="m b">Close</text>
</svg>
</body></html>
